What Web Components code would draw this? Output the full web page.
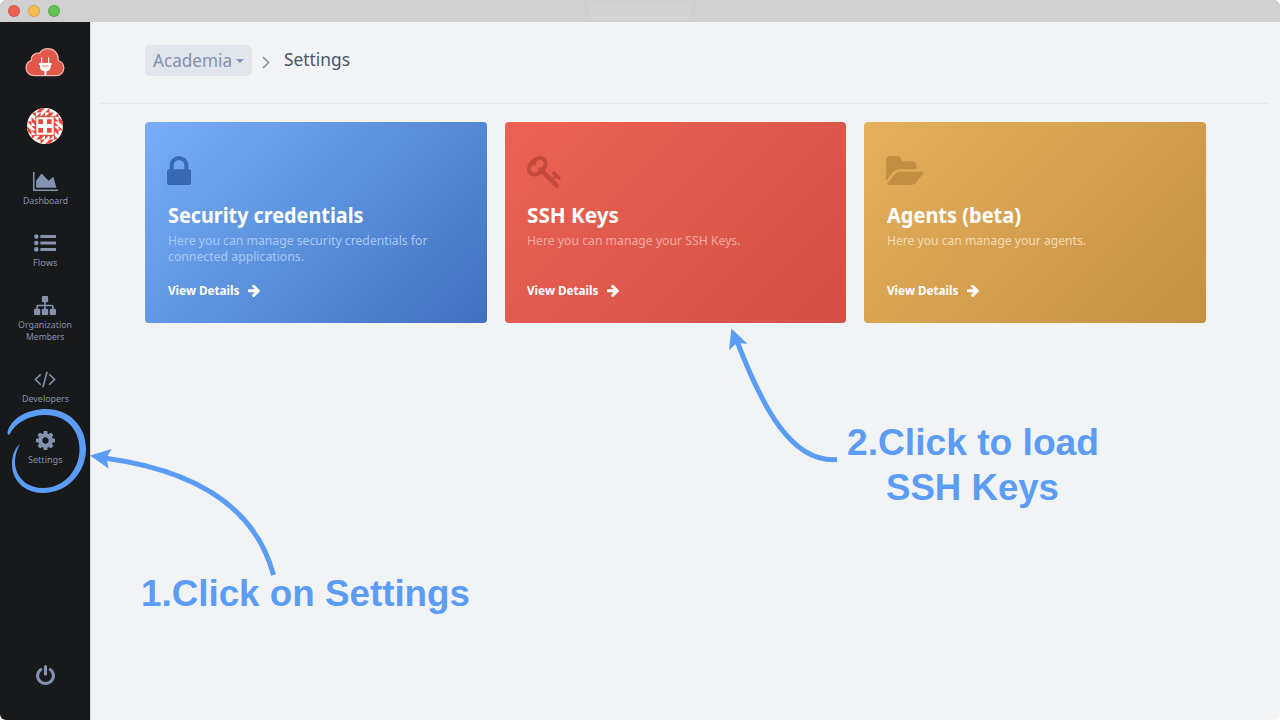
<!DOCTYPE html>
<html lang="en">
<head>
<meta charset="utf-8">
<title>Settings</title>
<style>
html,body{margin:0;height:720px;overflow:hidden;background:#fff}
body{font-family:"Noto Sans","Open Sans",sans-serif}
</style>
</head>
<body>
<app-window></app-window>
<script>
const define = (name, html, setup) => customElements.define(name, class extends HTMLElement {
  connectedCallback() {
    if (this.shadowRoot) return;
    this.attachShadow({ mode: 'open' }).innerHTML = typeof html === 'function' ? html(this) : html;
    if (setup) setup(this);
  }
});

// Icon outlines: [viewBox, markup]
const ICONS = {
  lock: ['320 128 1152 1408', '<path d="M640 768h512v-192q0-106-75-181t-181-75-181 75-75 181v192zm832 96v576q0 40-28 68t-68 28h-960q-40 0-68-28t-28-68v-576q0-40 28-68t68-28h32v-192q0-184 132-316t316-132 316 132 132 316v192h32q40 0 68 28t28 68z"/>'],
  folder: ['64 128 1879 1408', '<path d="M1943 952q0 31-31 66l-336 396q-43 51-120.500 86.500t-143.500 35.500h-1088q-34 0-60.500-13t-26.500-43q0-31 31-66l336-396q43-51 120.500-86.500t143.500-35.500h1088q34 0 60.500 13t26.500 43zm-343-344v160h-832q-94 0-197 47.500t-164 119.500l-337 396-5 6q0-4-.5-12.500t-.5-12.500v-960q0-92 66-158t158-66h320q92 0 158 66t66 158v32h544q92 0 158 66t66 158z"/>'],
  key: ['0 128 1683 1592', '<path d="M832 512q0-80-56-136t-136-56-136 56-56 136q0 42 19 83-41-19-83-19-80 0-136 56t-56 136 56 136 136 56 136-56 56-136q0-42-19-83 41 19 83 19 80 0 136-56t56-136zm851 704q0 17-49 66t-66 49q-9 0-28.500-16t-36.500-33-38.500-40-24.500-26l-96 96 220 220q28 28 28 68 0 42-39 81t-81 39q-40 0-68-28l-671-671q-176 131-365 131-163 0-265.500-102.500t-102.500-265.500q0-160 95-313t248-248 313-95q163 0 265.500 102.500t102.500 265.500q0 189-131 365l355 355 96-96q-3-3-26-24.500t-40-38.500-33-36.500-16-28.500q0-17 49-66t66-49q13 0 23 10 6 6 46 44.500t82 79.500 86.500 86 73 78 28.500 41z"/>'],
  chart: ['0 128 2048 1536', '<path d="M2048 1536v128h-2048v-1536h128v1408h1920zm-384-1024l256 896h-1664v-576l448-576 576 576z"/>'],
  list: ['0 0 22 18', '<circle cx="2.300" cy="2.600" r="2.300"/><circle cx="2.300" cy="9" r="2.300"/><circle cx="2.300" cy="15.400" r="2.300"/><path d="M6.300 1.100h15.700v3H6.300zM6.300 7.500h15.700v3H6.300zM6.300 13.900h15.700v3H6.300z"/>'],
  sitemap: ['0 128 1792 1536', '<path d="M1792 1248v320q0 40-28 68t-68 28h-320q-40 0-68-28t-28-68v-320q0-40 28-68t68-28h96v-192h-512v192h96q40 0 68 28t28 68v320q0 40-28 68t-68 28h-320q-40 0-68-28t-28-68v-320q0-40 28-68t68-28h96v-192h-512v192h96q40 0 68 28t28 68v320q0 40-28 68t-68 28h-320q-40 0-68-28t-28-68v-320q0-40 28-68t68-28h96v-192q0-52 38-90t90-38h512v-192h-96q-40 0-68-28t-28-68v-320q0-40 28-68t68-28h320q40 0 68 28t28 68v320q0 40-28 68t-68 28h-96v192h512q52 0 90 38t38 90v192h96q40 0 68 28t28 68z"/>'],
  code: ['0 0 22 17', '<path d="M6.800 3.200L1.400 8.500l5.400 5.300M15.200 3.200l5.400 5.300-5.400 5.300M13.100.8L8.900 16.200" fill="none" stroke="currentColor" stroke-width="1.600"/>'],
  cog: ['128 128 1536 1536', '<path d="M1152 896q0-106-75-181t-181-75-181 75-75 181 75 181 181 75 181-75 75-181zm512-109v222q0 12-8 23t-20 13l-185 28q-19 54-39 91 35 50 107 138 10 12 10 25t-9 23q-27 37-99 108t-94 71q-12 0-26-9l-138-108q-44 23-91 38-16 136-29 186-7 28-36 28h-222q-14 0-24.500-8.500t-11.500-21.500l-28-184q-49-16-90-37l-141 107q-10 9-25 9-14 0-25-11-126-114-165-168-7-10-7-23 0-12 8-23 15-21 51-66.500t54-70.500q-27-50-41-99l-183-27q-13-2-21-12.500t-8-23.500v-222q0-12 8-23t19-13l186-28q14-46 39-92-40-57-107-138-10-12-10-24 0-10 9-23 26-36 98.500-107.500t94.500-71.500q13 0 26 10l138 107q44-23 91-38 16-136 29-186 7-28 36-28h222q14 0 24.500 8.500t11.500 21.500l28 184q49 16 90 37l142-107q9-9 24-9 13 0 25 10 129 119 165 170 7 8 7 22 0 12-8 23-15 21-51 66.500t-54 70.500q26 50 41 98l183 28q13 2 21 12.500t8 23.500z"/>'],
  power: ['128 0 1536 1664', '<path d="M1664 896q0 156-61 298t-164 245-245 164-298 61-298-61-245-164-164-245-61-298q0-182 80.500-343t226.500-270q43-32 95.500-25t83.500 50q32 42 24.500 94.500t-49.500 84.500q-98 74-151.500 181t-53.500 228q0 104 40.500 198.500t109.500 163.500 163.500 109.500 198.500 40.500 198.500-40.500 163.500-109.500 109.500-163.500 40.500-198.500q0-121-53.500-228t-151.500-181q-42-32-49.500-84.500t24.500-94.500q31-43 84-50t95 25q146 109 226.500 270t80.500 343zm-640-768v640q0 52-38 90t-90 38-90-38-38-90v-640q0-52 38-90t90-38 90 38 38 90z"/>'],
  arrow: ['128 221 1472 1518', '<path d="M1600 960q0 54-37 91l-651 651q-39 37-91 37-51 0-90-37l-75-75q-38-38-38-91t38-91l293-293h-704q-52 0-84.500-37.500t-32.500-90.500v-128q0-53 32.500-90.500t84.500-37.500h704l-293-294q-38-36-38-90t38-90l75-75q38-38 90-38 53 0 91 38l651 651q37 35 37 90z"/>'],
  chevron: ['0 0 8 13', '<path d="M1.100 1.100L6.700 6.500 1.100 11.900" fill="none" stroke="currentColor" stroke-width="1.600"/>'],
  caret: ['0 0 8 4', '<path d="M0 0h8L4.600 3.600a.9.9 0 0 1-1.200 0z"/>']
};
define('ui-icon', el => {
  const [box, body] = ICONS[el.getAttribute('name')];
  return `<style>:host{display:block;flex:none;width:${el.getAttribute('w')}px;height:${el.getAttribute('h')}px}svg{display:block;width:100%;height:100%}</style><svg viewBox="${box}" preserveAspectRatio="none" fill="currentColor">${body}</svg>`;
});

// Condenses one line of text to a given width.
define('fit-text', el => `<style>:host{display:block;flex:none;width:${el.getAttribute('w')}px;white-space:nowrap}span{display:inline-block;transform-origin:0 50%}</style><span><slot></slot></span>`, el => {
  const s = el.shadowRoot.querySelector('span');
  const n = s.getBoundingClientRect().width;
  if (n) s.style.transform = `scaleX(${el.getAttribute('w') / n})`;
});

define('title-bar', `<style>
:host{display:flex;align-items:center;gap:8px;height:22px;padding-left:8px;box-sizing:border-box;background:#d0d0d0;flex:none;position:relative}
i{width:12px;height:12px;border-radius:50%;box-sizing:border-box;border:.5px solid #0002}
b{width:100px;height:18px;margin-left:522px;background:#d3d3d3}
</style><i style="background:#ed6157"></i><i style="background:#f5bd4f"></i><i style="background:#61c454"></i><b></b>`);

define('brand-logo', `<style>:host{display:block;width:40px;height:29px}svg{display:block}</style>
<svg width="40" height="29" viewBox="0 0 40 29"><path d="M9.300 27.600C4.500 27.600 1.100 24.500 1.100 20c0-3.900 2.100-6.700 5.400-7.700-.6-4.500 3.200-8.200 8-7 1.700-2.900 4.800-4.600 8.400-4.600 6 0 10.300 4.300 10.300 10.300l-.1 1.500c3.600 1.200 5.700 4 5.700 7.600 0 4.600-3.300 7.500-7.700 7.500z" fill="#e15749" stroke="#f6b5ad" stroke-width="1.300"/><path d="M16 9.400h1.200v5.700h5.800V9.400h1.200v5.700h2.400v1.900h-.9v2.300c0 2.200-1.900 3.800-4.300 4v4h-2v-4c-2.500-.2-4.400-1.800-4.400-4V17h-.9v-1.900H16z" fill="#fff"/><path d="M16 17h8.500l-2.200 2.400h-3.800z" fill="#f1c3bd"/></svg>`);

define('user-avatar', () => {
  let t = '';
  for (let k = 0; k < 4; k++) t += `<g transform="rotate(${k * 90} 18 18)"><path d="M9 9L4.500 4.500H9zM9 9l4.500-4.500V9zM13.500 9L18 4.500V9zM18 9l4.500-4.500V9zM22.500 4.500H27L22.500 9zM9 4.500L13.500 0v4.500zM13.500 0H18l-4.500 4.500zM18 4.500L22.500 0v4.500z"/></g>`;
  return `<style>:host{display:block;width:36px;height:36px}svg{display:block;border-radius:50%}</style>
<svg width="36" height="36" viewBox="0 0 36 36"><path fill="#fff" d="M0 0h36v36H0z"/><g fill="#e8473b">${t}<path d="M8.300 8.300h19.400v19.400H8.300z"/></g><path d="M9.300 9.300h17.400v17.400H9.300z" fill="#fff"/><g fill="#e8473b"><path d="M11.300 11.300h4.700V16h-4.700zM20 11.300h4.700V16H20zM11.300 20H16v4.700h-4.700zM20 20h4.700v4.700H20z"/></g></svg>`;
});

define('nav-item', `<style>:host{display:flex;flex-direction:column;align-items:center;color:#8292b0;font-size:9.800px;line-height:12px}
div{height:20px;display:flex;align-items:center;margin-bottom:4px}</style><div><slot name="icon"></slot></div><slot></slot>`);

define('side-bar', `<style>
:host{display:flex;flex-direction:column;align-items:center;width:90px;flex:none;box-sizing:border-box;padding:26px 0 35px;background:#18191b;color:#8292b0}
user-avatar{margin:31px 0 27px}
nav{display:flex;flex-direction:column;gap:26px}
nav nav-item:last-child{margin-top:-1px}
footer{margin-top:auto}
</style>
<brand-logo></brand-logo><user-avatar></user-avatar>
<nav>
<nav-item><ui-icon slot="icon" name="chart" w="25" h="19"></ui-icon><fit-text w="45">Dashboard</fit-text></nav-item>
<nav-item><ui-icon slot="icon" name="list" w="22" h="18"></ui-icon><fit-text w="24.500">Flows</fit-text></nav-item>
<nav-item><ui-icon slot="icon" name="sitemap" w="22" h="19"></ui-icon><fit-text w="54">Organization</fit-text><fit-text w="38.500">Members</fit-text></nav-item>
<nav-item><ui-icon slot="icon" name="code" w="22" h="17"></ui-icon><fit-text w="47">Developers</fit-text></nav-item>
<nav-item><ui-icon slot="icon" name="cog" w="19" h="19"></ui-icon><fit-text w="34.500">Settings</fit-text></nav-item>
</nav>
<footer><ui-icon name="power" w="19" h="20"></ui-icon></footer>`);

define('bread-crumb', `<style>
:host{display:flex;align-items:flex-start;height:82px;box-sizing:border-box;padding:23px 0 0 54px;margin:0;font-size:18.800px;line-height:30px;background:linear-gradient(#e5e7ea,#e5e7ea) 9px 100%/calc(100% - 20px) 1px no-repeat}
.org{display:flex;align-items:center;gap:4px;width:107px;height:31px;box-sizing:border-box;padding-left:8px;border-radius:5px;background:#e1e5ec;color:#8292b0}
.org fit-text{margin-top:-1px}
.sep{color:#8292b0;margin:11px 14px 0 10px}
.here{color:#4b5569;margin-top:-1px}
</style>
<div class="org"><fit-text w="79">Academia</fit-text><ui-icon name="caret" w="8" h="4"></ui-icon></div>
<ui-icon class="sep" name="chevron" w="8" h="13"></ui-icon>
<fit-text class="here" w="66">Settings</fit-text>`);

define('settings-card', `<style>
:host{display:flex;flex-direction:column;height:201px;box-sizing:border-box;padding:34px 22.500px 0;border-radius:4px;background:linear-gradient(135deg,var(--from),var(--mid) 50%,var(--to));color:#fff}
.icon{height:45px;color:var(--ink)}
.title{font-weight:700;font-size:21.500px;line-height:28px}
.desc{font-size:12.500px;line-height:16px;height:46px;margin-top:4px;color:var(--soft)}
.more{display:flex;align-items:center;gap:8.500px;font-size:12.500px;line-height:16px;font-weight:700;margin-top:4px}
</style>
<div class="icon"><slot name="icon"></slot></div>
<div class="title"><slot name="title"></slot></div>
<div class="desc"><slot></slot></div>
<div class="more"><fit-text w="71.500">View Details</fit-text><ui-icon name="arrow" w="12" h="12"></ui-icon></div>`);

define('card-grid', `<style>
:host{display:grid;grid-template-columns:repeat(3,1fr);gap:18px;padding:18px 74px 0 54px}
.blue{--from:#78aef9;--mid:#5b90dc;--to:#4170c0;--ink:#3a69b4;--soft:#a8c9f5}
.red{--from:#ed6154;--mid:#df594c;--to:#d45043;--ink:#c54a3e;--soft:#f2aaa3}
.gold{--from:#e5b05c;--mid:#d4a04f;--to:#c49042;--ink:#c28f42;--soft:#f2dbb3}
ui-icon{margin-left:-.5px}
</style>
<settings-card class="blue"><ui-icon slot="icon" name="lock" w="24" h="29"></ui-icon><fit-text slot="title" w="195.500">Security credentials</fit-text><fit-text w="259.500">Here you can manage security credentials for</fit-text><fit-text w="136">connected applications.</fit-text></settings-card>
<settings-card class="red"><ui-icon slot="icon" name="key" w="34" h="32"></ui-icon><fit-text slot="title" w="92">SSH Keys</fit-text><fit-text w="213.500">Here you can manage your SSH Keys.</fit-text></settings-card>
<settings-card class="gold"><ui-icon slot="icon" name="folder" w="37.500" h="29"></ui-icon><fit-text slot="title" w="134">Agents (beta)</fit-text><fit-text w="199">Here you can manage your agents.</fit-text></settings-card>`);

// Tutorial marks laid over the interface.
define('tour-overlay', `<style>
:host{position:absolute;inset:0;pointer-events:none;color:#5b9cf6;font:bold 37.500px/45px "Liberation Sans",sans-serif}
svg{position:absolute;inset:0}
.a,.b{position:absolute}
.a{left:141px;top:571px}
.b{left:847px;top:420px;display:flex;flex-direction:column;align-items:center}
.b :last-child{margin-right:2px}
</style>
<svg width="1280" height="720" viewBox="0 0 1280 720" fill="none" stroke="#5b9cf6" stroke-width="5">
<path d="M273.500 575C258 517 209 472 104 458"/><path d="M90 455.500L111.500 449 106.500 458 108.500 468.500z" fill="#5b9cf6" stroke="none"/>
<path d="M837 459.500C792 463 763 409 736.500 340"/><path d="M731.300 328.500L747.500 343.700 736.500 343 729 350.500z" fill="#5b9cf6" stroke="none"/>
<path d="M7.500 432C11 418 28 409 46 409C69 409 86 426 86 449C86 473 67 493 43 493C25 493 12 481 12 464C12 455 15 448 20 444C16 451 14 460 15.500 467C18 480 29 488 43 488C64 488 79.500 470 79.500 449C79.500 429 65 415 46 415C29 415 15 423 10 434Q7.500 436 7.500 432z" fill="#5b9cf6" stroke="none"/>
</svg>
<fit-text class="a" w="329">1.Click on Settings</fit-text>
<div class="b"><fit-text w="252">2.Click to load</fit-text><fit-text w="173">SSH Keys</fit-text></div>`);

define('app-window', `<style>
:host{display:flex;flex-direction:column;position:relative;width:1280px;height:720px;border-radius:6px;overflow:hidden;background:#f1f3f5}
.body{display:flex;flex:1;min-height:0}
main{flex:1;border-left:1px solid #d2d4d6}
</style>
<title-bar></title-bar>
<div class="body"><side-bar></side-bar><main><bread-crumb></bread-crumb><card-grid></card-grid></main></div>
<tour-overlay></tour-overlay>`);
</script>
</body>
</html>
